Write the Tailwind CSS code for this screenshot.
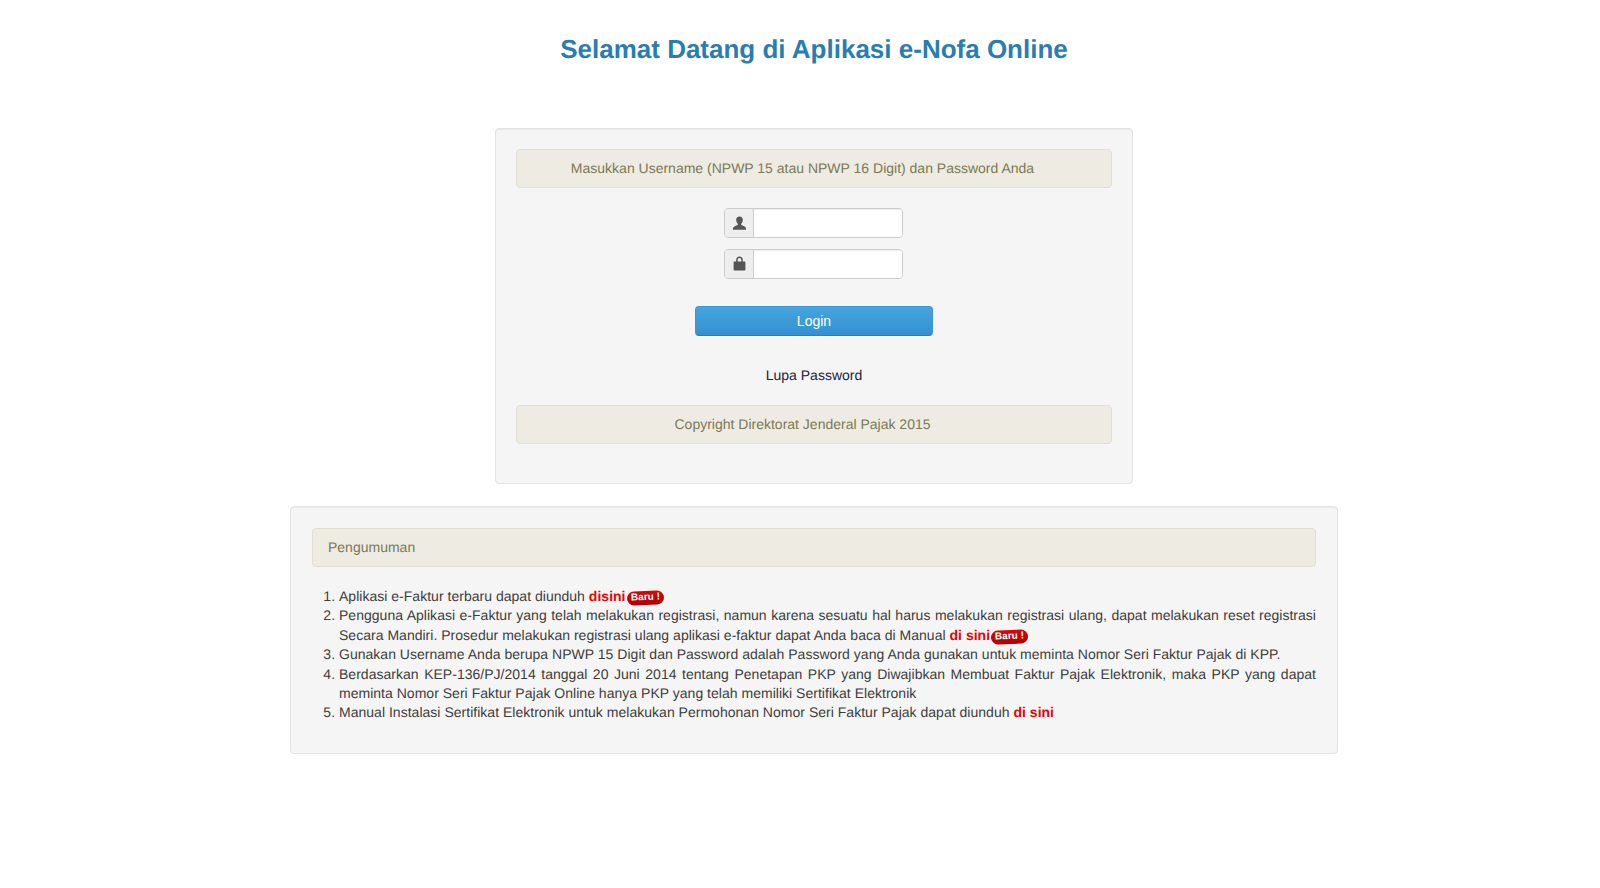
<!DOCTYPE html>
<html lang="en">

<head>
    <meta charset="UTF-8">
    <meta name="viewport" content="width=device-width, initial-scale=1.0">
    <title>e-Nofa Online</title>
    <script src="https://cdn.jsdelivr.net/npm/@tailwindcss/browser@4"></script>
</head>

<body class="bg-white font-['Liberation_Sans',Arial,sans-serif] text-[14px] text-[#3d3d3d] [text-rendering:geometricPrecision]">
    <div class="ml-[290px] w-[1048px] flex flex-col items-center">
        <!-- Title -->
        <h1 class="mt-[31px] h-[37px] leading-[37px] text-[26px] font-bold text-[#2a7db0]">Selamat Datang di Aplikasi e-Nofa Online</h1>

        <!-- Login card -->
        <div class="mt-[60px] w-[638px] h-[356px] p-5 bg-[#f5f5f5] border border-[#e3e3e3] rounded-[4px] shadow-[inset_0_1px_1px_rgba(0,0,0,0.05)] flex flex-col items-center">
            <div class="w-full h-[39px] pl-[15px] pr-[38px] flex items-center justify-center bg-[#edebe2] border border-[#e2dfd0] rounded-[4px] text-[#7b7a55]">Masukkan Username (NPWP 15 atau NPWP 16 Digit) dan Password Anda</div>

            <div class="mt-5 mr-px flex w-[179px] h-[30px] rounded-[4px] border border-[#ccc] overflow-hidden">
                <span class="w-[29px] shrink-0 flex items-center justify-center bg-[#eee] border-r border-[#ccc]">
                    <svg class="w-[15px] h-[15px]" viewBox="0 0 14 14" fill="#555"><path d="M7 0.5c-2 0-3.1 1.4-3.1 3.2 0 1.4 0.6 2.7 1.5 3.500v1.200c-1.700 0.600-4.100 1.400-4.400 2.600-0.100 0.500-0.100 1.200-0.100 1.800h12.200c0-0.600 0-1.300-0.100-1.800-0.300-1.200-2.700-2-4.400-2.600V7.200c0.900-0.800 1.500-2.100 1.500-3.500 0-1.800-1.100-3.200-3.100-3.200z"/></svg>
                </span>
                <input type="text" class="flex-1 min-w-0 bg-white shadow-[inset_0_1px_1px_rgba(0,0,0,0.075)] outline-none">
            </div>
            <div class="mt-[11px] mr-px flex w-[179px] h-[30px] rounded-[4px] border border-[#ccc] overflow-hidden">
                <span class="w-[29px] shrink-0 flex items-center justify-center bg-[#eee] border-r border-[#ccc]">
                    <svg class="w-[15px] h-[15px] -mt-[1px]" viewBox="0 0 14 14" fill="#555"><path d="M7 0.5C5 0.5 3.9 1.9 3.9 3.6V5.2H2.2c-0.4 0-0.7 0.3-0.7 0.7v6.900c0 0.400 0.300 0.700 0.700 0.700h9.600c0.400 0 0.700-0.300 0.700-0.700V5.900c0-0.400-0.300-0.700-0.700-0.700h-1.700V3.600C10.100 1.900 9 0.500 7 0.500zM5.300 5.200V3.600C5.300 2.500 5.900 1.800 7 1.800s1.700 0.700 1.700 1.800v1.600z"/></svg>
                </span>
                <input type="password" class="flex-1 min-w-0 bg-white shadow-[inset_0_1px_1px_rgba(0,0,0,0.075)] outline-none">
            </div>

            <button class="mt-[27px] w-[238px] h-[30px] rounded-[4px] border border-[#3b97d3] border-b-[#1f7fc0] bg-gradient-to-b from-[#46a5dd] to-[#3291d2] text-white text-[14px]">Login</button>

            <a class="mt-[29px] h-[20px] leading-[20px] text-[#1a2240]">Lupa Password</a>

            <div class="mt-[20px] w-full h-[39px] pl-[15px] pr-[38px] flex items-center justify-center bg-[#edebe2] border border-[#e2dfd0] rounded-[4px] text-[#7b7a55]">Copyright Direktorat Jenderal Pajak 2015</div>
        </div>

        <!-- Announcements -->
        <div class="mt-[22px] w-full h-[248px] p-[21px] bg-[#f5f5f5] border border-[#e3e3e3] rounded-[4px] shadow-[inset_0_1px_1px_rgba(0,0,0,0.05)]">
            <div class="h-[39px] pl-[15px] flex items-center bg-[#edebe2] border border-[#e2dfd0] rounded-[4px] text-[#7b7a55]">Pengumuman</div>
            <ol class="mt-[20px] pl-[27px] list-decimal text-justify leading-[19.4px] tracking-[0.02px]">
                <li>Aplikasi e-Faktur terbaru dapat diunduh <a class="font-bold text-[#f00000]">disini</a><span class="inline-block align-[1px] ml-px w-[37px] h-[14px] leading-[14px] text-center text-[10px] font-bold text-white bg-gradient-to-b from-[#d80808] to-[#b00000] rounded-[7px] -rotate-2">Baru !</span></li>
                <li>Pengguna Aplikasi e-Faktur yang telah melakukan registrasi, namun karena sesuatu hal harus melakukan registrasi ulang, dapat melakukan reset registrasi Secara Mandiri. Prosedur melakukan registrasi ulang aplikasi e-faktur dapat Anda baca di Manual <a class="font-bold text-[#f00000]">di sini</a><span class="inline-block align-[1px] ml-px w-[37px] h-[14px] leading-[14px] text-center text-[10px] font-bold text-white bg-gradient-to-b from-[#d80808] to-[#b00000] rounded-[7px] -rotate-2">Baru !</span></li>
                <li>Gunakan Username Anda berupa NPWP 15 Digit dan Password adalah Password yang Anda gunakan untuk meminta Nomor Seri Faktur Pajak di KPP.</li>
                <li>Berdasarkan KEP-136/PJ/2014 tanggal 20 Juni 2014 tentang Penetapan PKP yang Diwajibkan Membuat Faktur Pajak Elektronik, maka PKP yang dapat meminta Nomor Seri Faktur Pajak Online hanya PKP yang telah memiliki Sertifikat Elektronik</li>
                <li>Manual Instalasi Sertifikat Elektronik untuk melakukan Permohonan Nomor Seri Faktur Pajak dapat diunduh <a class="font-bold text-[#f00000]">di sini</a></li>
            </ol>
        </div>
    </div>
</body>

</html>
